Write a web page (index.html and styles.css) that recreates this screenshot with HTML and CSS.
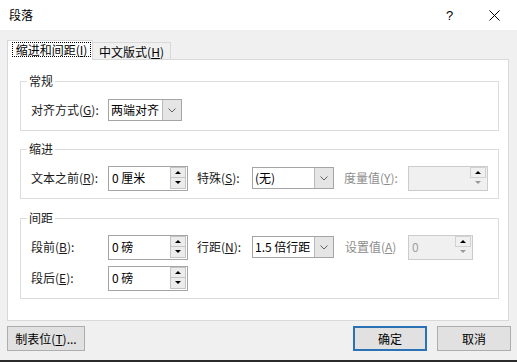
FILE: index.html
```html
<!DOCTYPE html>
<html lang="zh-CN">
<head>
<meta charset="utf-8">
<title>段落</title>
<link rel="stylesheet" href="styles.css">
</head>
<body>
<div class="dialog">
  <div class="titlebar">
    <div class="title">段落</div>
    <div class="tb-btn tb-help">?</div>
    <div class="tb-btn">
      <svg width="11" height="11" viewBox="0 0 11 11"><path d="M0.5 0.5L10.5 10.5M10.5 0.5L0.5 10.5" stroke="#000" stroke-width="1" fill="none"/></svg>
    </div>
  </div>
  <div class="content">
    <div class="tabs">
      <div class="tab tab-active"><span class="focus">缩进和间距(<u>I</u>)</span></div>
      <div class="tab tab-plain">中文版式(<u>H</u>)</div>
    </div>
    <div class="panel">
      <fieldset class="group">
        <legend>常规</legend>
        <div class="row">
          <span class="lbl lbl-main">对齐方式(<u>G</u>):</span>
          <div class="combo combo-sm">
            <span class="combo-text">两端对齐</span>
            <span class="combo-arrow"><svg width="8" height="5" viewBox="0 0 8 5"><path d="M0.5 0.5L4 4L7.5 0.5" stroke="#606060" fill="none"/></svg></span>
          </div>
        </div>
      </fieldset>

      <fieldset class="group">
        <legend>缩进</legend>
        <div class="row">
          <span class="lbl lbl-main">文本之前(<u>R</u>):</span>
          <div class="spin">
            <span class="spin-text">0 厘米</span>
            <span class="spin-btns"><span class="spin-btn"><i class="tri-up"></i></span><span class="spin-btn spin-down"><i class="tri-down"></i></span></span>
          </div>
          <span class="lbl lbl-mid">特殊(<u>S</u>):</span>
          <div class="combo combo-md">
            <span class="combo-text">(无)</span>
            <span class="combo-arrow"><svg width="8" height="5" viewBox="0 0 8 5"><path d="M0.5 0.5L4 4L7.5 0.5" stroke="#606060" fill="none"/></svg></span>
          </div>
          <span class="lbl lbl-end lbl-disabled">度量值(<u>Y</u>):</span>
          <div class="spin spin-disabled">
            <span class="spin-text"></span>
            <span class="spin-btns"><span class="spin-btn"><i class="tri-up"></i></span><span class="spin-btn spin-down"><i class="tri-down tri-gray"></i></span></span>
          </div>
        </div>
      </fieldset>

      <fieldset class="group group-last">
        <legend>间距</legend>
        <div class="row">
          <span class="lbl lbl-main">段前(<u>B</u>):</span>
          <div class="spin">
            <span class="spin-text">0 磅</span>
            <span class="spin-btns"><span class="spin-btn"><i class="tri-up"></i></span><span class="spin-btn spin-down"><i class="tri-down"></i></span></span>
          </div>
          <span class="lbl lbl-mid">行距(<u>N</u>):</span>
          <div class="combo combo-md">
            <span class="combo-text">1.5 倍行距</span>
            <span class="combo-arrow"><svg width="8" height="5" viewBox="0 0 8 5"><path d="M0.5 0.5L4 4L7.5 0.5" stroke="#606060" fill="none"/></svg></span>
          </div>
          <span class="lbl lbl-end2 lbl-disabled">设置值(<u>A</u>)</span>
          <div class="spin spin-disabled spin-sm">
            <span class="spin-text">0</span>
            <span class="spin-btns"><span class="spin-btn"><i class="tri-up"></i></span><span class="spin-btn spin-down"><i class="tri-down tri-gray"></i></span></span>
          </div>
        </div>
        <div class="row">
          <span class="lbl lbl-main">段后(<u>E</u>):</span>
          <div class="spin">
            <span class="spin-text">0 磅</span>
            <span class="spin-btns"><span class="spin-btn"><i class="tri-up"></i></span><span class="spin-btn spin-down"><i class="tri-down"></i></span></span>
          </div>
        </div>
      </fieldset>
    </div>
    <div class="buttons">
      <div class="btn btn-tabs">制表位(<u>T</u>)...</div>
      <div class="spacer"></div>
      <div class="btn btn-default">确定</div>
      <div class="btn">取消</div>
    </div>
  </div>
  <div class="bottom-edge"></div>
</div>
</body>
</html>
```

FILE: styles.css
```css
html, body {
  margin: 0;
  padding: 0;
}
body {
  width: 517px;
  height: 362px;
  overflow: hidden;
  background: #f0f0f0;
  font-family: "Noto Sans CJK SC", "Microsoft YaHei", "Liberation Sans", sans-serif;
  font-size: 12px;
  color: #1a1a1a;
}
u {
  text-decoration: underline;
  text-underline-offset: 1px;
}
.dialog {
  display: flex;
  flex-direction: column;
  width: 517px;
  height: 362px;
}
.titlebar {
  height: 30px;
  background: #fff;
  display: flex;
  align-items: center;
  padding-left: 9px;
  flex-shrink: 0;
}
.title {
  flex: 1;
  line-height: 16px;
  color: #000;
}
.tb-btn {
  width: 45px;
  height: 30px;
  display: flex;
  align-items: center;
  justify-content: center;
}
.tb-help {
  font-family: "Liberation Sans", sans-serif;
  font-size: 13px;
  color: #000;
}
.content {
  flex: 1;
  padding: 10px 0 0 7px;
  display: flex;
  flex-direction: column;
}
.tabs {
  display: flex;
  align-items: flex-end;
  height: 20px;
}
.tab {
  box-sizing: border-box;
  color: #000;
}
.tab-active {
  position: relative;
  z-index: 1;
  width: 86px;
  height: 20px;
  background: #fff;
  border: 1px solid #d9d9d9;
  border-bottom: none;
  padding: 1px 0 0 4px;
}
.focus {
  display: block;
  box-sizing: border-box;
  width: 79px;
  height: 15px;
  border: 1px dotted #000;
  line-height: 13px;
  text-align: center;
}
.tab-plain {
  width: 78px;
  height: 18px;
  background: #f0f0f0;
  border: 1px solid #d9d9d9;
  border-left: none;
  border-bottom: none;
  text-align: center;
  line-height: 17px;
}
.panel {
  box-sizing: border-box;
  width: 502px;
  height: 262px;
  margin-top: -1px;
  background: #fff;
  border: 1px solid #d9d9d9;
  padding: 13px 9px 0 12px;
  display: flex;
  flex-direction: column;
  gap: 10px;
}
.group {
  margin: 0;
  padding: 8px 10px 7px 10px;
  border: 1px solid #dcdcdc;
  min-inline-size: 0;
  display: flex;
  flex-direction: column;
  gap: 5px;
}
.group-last {
  margin-top: 1px;
}
legend {
  padding: 0 2px;
  margin-left: -4px;
  line-height: 16px;
  font-size: 12px;
  color: #1a1a1a;
}
.row {
  display: flex;
  align-items: center;
  height: 26px;
}
.lbl {
  flex-shrink: 0;
  white-space: nowrap;
  line-height: 16px;
}
.lbl-main { width: 77px; }
.lbl-mid { width: 55px; margin-left: 9px; }
.lbl-end { width: 64px; margin-left: 10px; }
.lbl-end2 { width: 63px; margin-left: 11px; }
.lbl-disabled { color: #8d8d8d; }

.combo {
  box-sizing: border-box;
  height: 22px;
  border: 1px solid #a5a5a5;
  background: #fff;
  display: flex;
  flex-shrink: 0;
}
.combo-sm { width: 74px; }
.combo-md { width: 82px; }
.combo-text {
  flex: 1;
  padding-left: 2px;
  line-height: 20px;
  white-space: nowrap;
  overflow: hidden;
  color: #000;
}
.combo-arrow {
  width: 18px;
  background: #e5e5e5;
  border-left: 1px solid #b9b9b9;
  display: flex;
  align-items: center;
  justify-content: center;
}

.spin {
  box-sizing: border-box;
  width: 80px;
  height: 25px;
  border: 1px solid #a5a5a5;
  background: #fff;
  display: flex;
  flex-shrink: 0;
}
.spin-sm { width: 65px; }
.spin-text {
  flex: 1;
  padding-left: 3px;
  line-height: 22px;
  color: #000;
  white-space: nowrap;
}
.spin-btns {
  display: flex;
  flex-direction: column;
  width: 16px;
  padding: 0 1px 1px 0;
}
.spin-btn {
  box-sizing: border-box;
  flex: 1;
  background: #ececec;
  border: 1px solid #c4c4c4;
  display: flex;
  align-items: center;
  justify-content: center;
}
.spin-down {
  border-top: none;
}
.tri-up {
  width: 0;
  height: 0;
  border-left: 3px solid transparent;
  border-right: 3px solid transparent;
  border-bottom: 3px solid #000;
}
.tri-down {
  width: 0;
  height: 0;
  border-left: 3px solid transparent;
  border-right: 3px solid transparent;
  border-top: 3px solid #000;
}
.tri-gray {
  border-top-color: #9a9a9a;
}
.spin-disabled {
  background: #f0f0f0;
  border-color: #cccccc;
}
.spin-disabled .spin-text {
  color: #a0a0a0;
}
.spin-disabled .spin-btn {
  background: #f0f0f0;
  border-color: #d2d2d2;
}
.spin-disabled .spin-down {
  border-color: transparent;
}

.buttons {
  display: flex;
  margin-top: 5px;
  padding-right: 6px;
}
.spacer {
  flex: 1;
}
.btn {
  box-sizing: border-box;
  width: 74px;
  height: 25px;
  background: #e1e1e1;
  border: 1px solid #adadad;
  display: flex;
  align-items: center;
  justify-content: center;
  color: #000;
  margin-left: 10px;
}
.btn-tabs {
  width: 78px;
  margin-left: 0;
}
.btn-default {
  border: 2px solid #2a72b5;
}
.bottom-edge {
  height: 2px;
  background: #2b2b2b;
  flex-shrink: 0;
}
```
